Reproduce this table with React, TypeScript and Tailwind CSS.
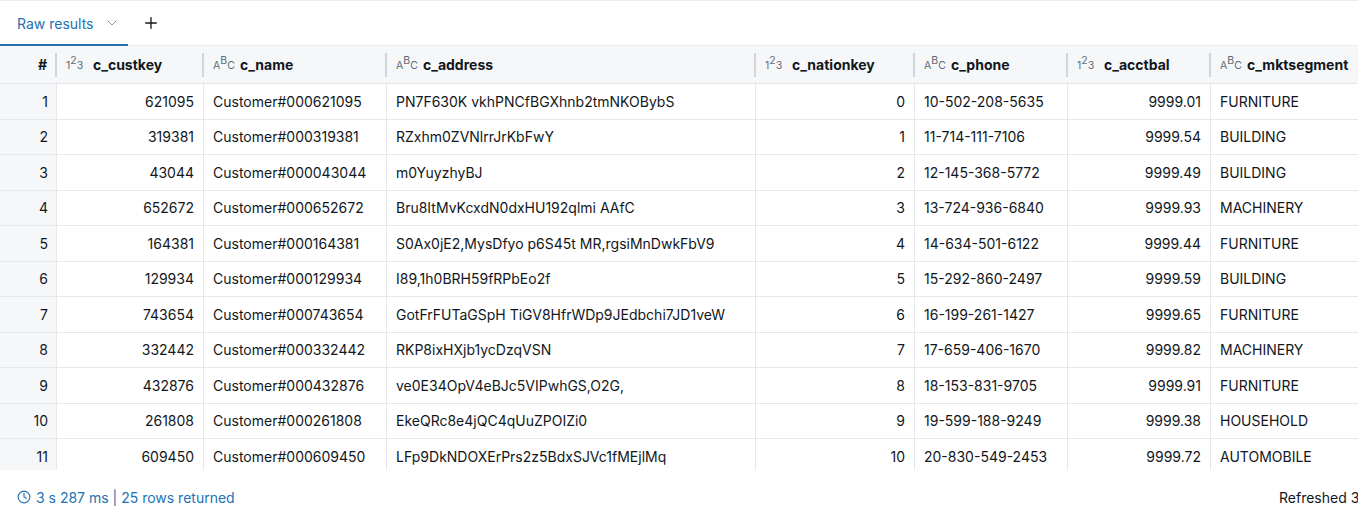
import { ChevronDown, Clock, Plus } from 'lucide-react';

type Kind = 'num' | 'str';

type Col = {
  key: string;
  label: string;
  kind: Kind;
};

const COLS: Col[] = [
  { key: 'custkey', label: 'c_custkey', kind: 'num' },
  { key: 'name', label: 'c_name', kind: 'str' },
  { key: 'address', label: 'c_address', kind: 'str' },
  { key: 'nationkey', label: 'c_nationkey', kind: 'num' },
  { key: 'phone', label: 'c_phone', kind: 'str' },
  { key: 'acctbal', label: 'c_acctbal', kind: 'num' },
  { key: 'mktsegment', label: 'c_mktsegment', kind: 'str' },
];

const ROWS: string[][] = [
  ['621095', 'Customer#000621095', 'PN7F630K vkhPNCfBGXhnb2tmNKOBybS', '0', '10-502-208-5635', '9999.01', 'FURNITURE'],
  ['319381', 'Customer#000319381', 'RZxhm0ZVNlrrJrKbFwY', '1', '11-714-111-7106', '9999.54', 'BUILDING'],
  ['43044', 'Customer#000043044', 'm0YuyzhyBJ', '2', '12-145-368-5772', '9999.49', 'BUILDING'],
  ['652672', 'Customer#000652672', 'Bru8ItMvKcxdN0dxHU192qlmi AAfC', '3', '13-724-936-6840', '9999.93', 'MACHINERY'],
  ['164381', 'Customer#000164381', 'S0Ax0jE2,MysDfyo p6S45t MR,rgsiMnDwkFbV9', '4', '14-634-501-6122', '9999.44', 'FURNITURE'],
  ['129934', 'Customer#000129934', 'I89,1h0BRH59fRPbEo2f', '5', '15-292-860-2497', '9999.59', 'BUILDING'],
  ['743654', 'Customer#000743654', 'GotFrFUTaGSpH TiGV8HfrWDp9JEdbchi7JD1veW', '6', '16-199-261-1427', '9999.65', 'FURNITURE'],
  ['332442', 'Customer#000332442', 'RKP8ixHXjb1ycDzqVSN', '7', '17-659-406-1670', '9999.82', 'MACHINERY'],
  ['432876', 'Customer#000432876', 've0E34OpV4eBJc5VIPwhGS,O2G,', '8', '18-153-831-9705', '9999.91', 'FURNITURE'],
  ['261808', 'Customer#000261808', 'EkeQRc8e4jQC4qUuZPOIZi0', '9', '19-599-188-9249', '9999.38', 'HOUSEHOLD'],
  ['609450', 'Customer#000609450', 'LFp9DkNDOXErPrs2z5BdxSJVc1fMEjlMq', '10', '20-830-549-2453', '9999.72', 'AUTOMOBILE'],
];

const GRID = 'grid grid-cols-[57px_147px_183px_369px_159px_153px_143px_200px]';

// small "123" / "ABC" data type marks in front of the header labels
function TypeIcon({ kind }: { kind: Kind }) {
  const [a, b, c] = kind === 'num' ? ['1', '2', '3'] : ['A', 'B', 'C'];
  return (
    <span className="inline-flex items-end text-[10.5px] leading-none text-[#5f6b76] font-normal mr-[9px] w-[18px]">
      <span className="translate-y-[2px]">{a}</span>
      <span className="-translate-y-[3px]">{b}</span>
      <span className="translate-y-[2px]">{c}</span>
    </span>
  );
}

function HeaderSep() {
  return <span className="ml-auto w-[2px] h-6 bg-[#d3d5d8] shrink-0" />;
}

export default function App() {
  return (
    <div
      className="w-[1358px] h-[518px] overflow-hidden bg-white flex flex-col text-[#11171c]"
      style={{ fontFamily: 'Inter, "Noto Sans", sans-serif' }}
    >
      <div className="h-[46px] shrink-0 flex items-end border-t border-[#ececec] border-b border-[#e3e5e8]">
        <div className="h-full w-[128px] flex items-center pl-[17px] border-b-2 border-[#2272b4] -mb-px">
          <span className="text-[14px] text-[#2272b4]">Raw results</span>
          <ChevronDown className="ml-auto mr-[8px] w-4 h-4 text-[#8a939b]" strokeWidth={1.5} />
        </div>
        <div className="h-full flex items-center pl-[14px]">
          <Plus className="w-[18px] h-[18px] text-[#11171c]" strokeWidth={1.75} />
        </div>
      </div>

      <div className="h-[424px] shrink-0 overflow-hidden">
        <div className={`${GRID} h-[38px] bg-[#f6f7f9] border-b border-[#e3e5e8]`}>
          <div className="flex items-center font-bold text-[14px]">
            <span className="flex-1 text-right pr-[8px]">#</span>
            <HeaderSep />
          </div>
          {COLS.map((col) => (
            <div key={col.key} className="flex items-center pl-[9px] font-bold text-[14px] whitespace-nowrap">
              <TypeIcon kind={col.kind} />
              <span>{col.label}</span>
              <HeaderSep />
            </div>
          ))}
        </div>

        {ROWS.map((row, i) => (
          <div key={i} className={`${GRID} h-[35.5px] text-[14px]`}>
            <div className="flex items-center justify-end pr-[8px] bg-[#f6f7f9] border-r border-b border-[#e6e8eb]">
              {i + 1}
            </div>
            {row.map((val, j) => (
              <div
                key={j}
                className={
                  COLS[j].kind === 'num'
                    ? 'flex items-center justify-end pr-[9px] border-r border-b border-[#e6e8eb] whitespace-nowrap overflow-hidden'
                    : 'flex items-center pl-[9px] border-r border-b border-[#e6e8eb] whitespace-nowrap overflow-hidden'
                }
              >
                {val}
              </div>
            ))}
          </div>
        ))}
      </div>

      <div className="h-[48px] shrink-0 flex items-center pt-[6px] text-[14px]">
        <div className="flex items-center pl-[17px] text-[#2272b4]">
          <Clock className="w-[14px] h-[14px] mr-[5px]" strokeWidth={2} />
          <span>3 s 287 ms | 25 rows returned</span>
        </div>
        <div className="ml-auto w-[79px] overflow-hidden whitespace-nowrap text-[#11171c]">
          Refreshed 3 seconds ago
        </div>
      </div>
    </div>
  );
}
